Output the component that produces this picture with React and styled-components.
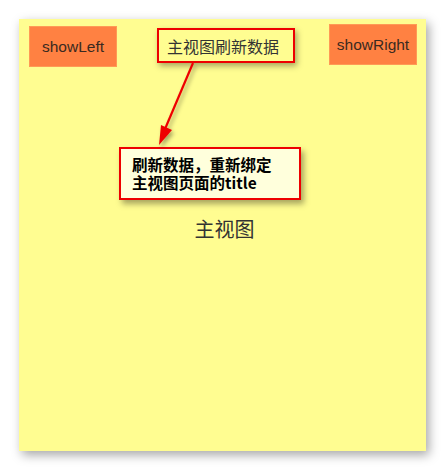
import React from "react"
import styled, { createGlobalStyle } from "styled-components"

const Global = createGlobalStyle`
  html, body {
    margin: 0;
    padding: 0;
    background: #ffffff;
  }
  body {
    font-family: "Liberation Sans", "Noto Sans CJK SC", sans-serif;
  }
`

const Page = styled.div`
  width: 446px;
  height: 471px;
  padding: 19px 0 0 19px;
  box-sizing: border-box;
`

const Screen = styled.div`
  position: relative;
  width: 407px;
  height: 432px;
  background: #fffd91;
  box-shadow: 3px 4px 10px rgba(0, 0, 0, 0.35);
  display: flex;
  flex-direction: column;
  align-items: center;
`

const NavBar = styled.div`
  width: 100%;
  box-sizing: border-box;
  padding: 5px 9px 0 10px;
  display: flex;
  justify-content: space-between;
  align-items: flex-start;
`

const NavButton = styled.div`
  width: 88px;
  height: 41px;
  margin-top: ${props => props.offset}px;
  background: #ff8142;
  box-shadow: inset 0 0 0 1px #ff9a55;
  color: #3a2a20;
  font-size: 15.5px;
  display: flex;
  align-items: center;
  justify-content: center;
`

const Title = styled.div`
  margin-top: 4px;
  margin-left: 6px;
  width: 138px;
  height: 35px;
  box-sizing: border-box;
  padding-left: 8px;
  border: 2px solid #ee0000;
  box-shadow: 2px 3px 6px rgba(0, 0, 0, 0.35);
  color: #333;
  font-family: "Noto Sans CJK SC", sans-serif;
  font-size: 16px;
  display: flex;
  align-items: center;
`

const Heading = styled.div`
  margin-top: 152px;
  margin-left: 4px;
  color: #333;
  font-family: "Noto Sans CJK SC", sans-serif;
  font-size: 20px;
  line-height: 20px;
`

const Note = styled.div`
  position: absolute;
  left: 100px;
  top: 128px;
  width: 182px;
  height: 53px;
  box-sizing: border-box;
  padding: 6px 0 0 11px;
  border: 2px solid #ee0000;
  background: #ffffdc;
  box-shadow: 3px 4px 6px rgba(0, 0, 0, 0.35);
  color: #000;
  font-family: "Noto Sans CJK SC", sans-serif;
  font-weight: 700;
`

const NoteLine = styled.div`
  font-size: 15.5px;
  line-height: 18px;
  height: 18px;
  overflow: visible;
  white-space: nowrap;
`

const Arrow = styled.svg`
  position: absolute;
  left: 0;
  top: 0;
  pointer-events: none;
`

export default function App() {
  return (
    <Page>
      <Global />
      <Screen>
        <NavBar>
          <NavButton offset={2}>showLeft</NavButton>
          <Title>主视图刷新数据</Title>
          <NavButton offset={0}>showRight</NavButton>
        </NavBar>
        <Heading>主视图</Heading>
        <Note>
          <NoteLine>刷新数据，重新绑定</NoteLine>
          <NoteLine>主视图页面的title</NoteLine>
        </Note>
        <Arrow width="407" height="432" viewBox="0 0 407 432">
          <defs>
            <filter id="sh" x="-50%" y="-50%" width="200%" height="200%">
              <feDropShadow dx="2" dy="3" stdDeviation="2" floodColor="#000" floodOpacity="0.35" />
            </filter>
          </defs>
          <g filter="url(#sh)">
            <line x1="174" y1="44" x2="146" y2="110" stroke="#ee0000" strokeWidth="2.2" />
            <polygon points="140,126 142,106 153,111" fill="#ee0000" />
          </g>
        </Arrow>
      </Screen>
    </Page>
  )
}
